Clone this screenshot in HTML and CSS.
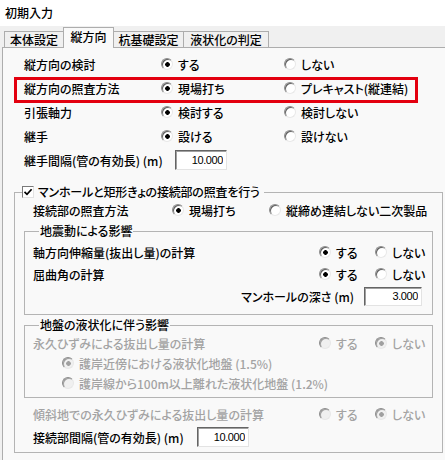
FILE: index.html
```html
<!DOCTYPE html>
<html lang="ja">
  <head>
    <meta charset="UTF-8" />
    <title>初期入力</title>
    <link rel="stylesheet" href="styles.css">
  </head>
  <body>
    <div class="titlebar">初期入力</div>
    <div class="tabs">
      <div class="tab t1">本体設定</div>
      <div class="tab t2 active">縦方向</div>
      <div class="tab t3">杭基礎設定</div>
      <div class="tab t4">液状化の判定</div>
    </div>

    <div class="panel">
      <div class="trow">
        <span>縦方向の検討</span>
        <label class="opt"><i class="rb on"></i>する</label>
        <label class="opt"><i class="rb"></i>しない</label>
      </div>
      <div class="trow mark">
        <span>縦方向の照査方法</span>
        <label class="opt"><i class="rb on"></i>現場打ち</label>
        <label class="opt"><i class="rb"></i>プレキャスト(縦連結)</label>
      </div>
      <div class="trow">
        <span>引張軸力</span>
        <label class="opt"><i class="rb on"></i>検討する</label>
        <label class="opt"><i class="rb"></i>検討しない</label>
      </div>
      <div class="trow">
        <span>継手</span>
        <label class="opt"><i class="rb on"></i>設ける</label>
        <label class="opt"><i class="rb"></i>設けない</label>
      </div>
      <div class="trow field">
        <span>継手間隔(管の有効長) (m)</span>
        <input class="num" type="text" value="10.000" readonly />
      </div>

      <fieldset class="grp">
        <legend class="chk-legend">
          <i class="cb">
            <svg width="10" height="10" viewBox="0 0 10 10"><path d="M1.5 4.8 L4 7.3 L8.6 2.2" fill="none" stroke="#000" stroke-width="1.7"/></svg>
          </i>
          <span class="cap">マンホールと矩形きょの接続部の照査を行う</span>
        </legend>

        <div class="grow method">
          <span>接続部の照査方法</span>
          <label class="opt"><i class="rb on"></i>現場打ち</label>
          <label class="opt"><i class="rb"></i>縦締め連結しない二次製品</label>
        </div>

        <fieldset class="sub-grp g1">
          <legend>地震動による影響</legend>
          <div class="prow">
            <span>軸方向伸縮量(抜出し量)の計算</span>
            <label class="opt"><i class="rb on"></i>する</label>
            <label class="opt"><i class="rb"></i>しない</label>
          </div>
          <div class="prow">
            <span>屈曲角の計算</span>
            <label class="opt"><i class="rb on"></i>する</label>
            <label class="opt"><i class="rb"></i>しない</label>
          </div>
          <div class="depth">
            <span>マンホールの深さ (m)</span>
            <input class="num wide" type="text" value="3.000" readonly />
          </div>
        </fieldset>

        <fieldset class="sub-grp g2">
          <legend>地盤の液状化に伴う影響</legend>
          <div class="prow dis">
            <span>永久ひずみによる抜出し量の計算</span>
            <label class="opt"><i class="rb"></i>する</label>
            <label class="opt"><i class="rb on"></i>しない</label>
          </div>
          <div class="sub dis">
            <label class="opt"><i class="rb on"></i>護岸近傍における液状化地盤 (1.5%)</label>
          </div>
          <div class="sub dis">
            <label class="opt"><i class="rb"></i>護岸線から100m以上離れた液状化地盤 (1.2%)</label>
          </div>
        </fieldset>

        <div class="grow pair dis slope">
          <span>傾斜地での永久ひずみによる抜出し量の計算</span>
          <label class="opt"><i class="rb"></i>する</label>
          <label class="opt"><i class="rb on"></i>しない</label>
        </div>
        <div class="grow field2">
          <span>接続部間隔(管の有効長) (m)</span>
          <input class="num" type="text" value="10.000" readonly />
        </div>
      </fieldset>
    </div>
  </body>
</html>
```

FILE: styles.css
```css
body {
  margin: 0;
  width: 445px;
  height: 460px;
  overflow: hidden;
  background-color: #f0f0f0;
  font-family: "Noto Sans CJK JP", sans-serif;
  font-size: 12px;
  font-weight: 500;
  font-feature-settings: "palt";
  color: #000;
}
.titlebar {
  height: 26px;
  line-height: 26px;
  padding-left: 5px;
  background-color: #fff;
}
.tabs {
  display: flex;
  align-items: flex-end;
  height: 21px;
  padding-left: 4px;
}
.tab {
  box-sizing: border-box;
  height: 16px;
  line-height: 15px;
  text-align: center;
  border: 1px solid #adadad;
  border-bottom: none;
  background-color: #f0f0f0;
}
.tab + .tab {
  margin-left: -1px;
}
.t1 { width: 60px; }
.t2 { width: 51px; }
.t3 { width: 71px; }
.t4 { width: 86px; }
.tab.active {
  position: relative;
  z-index: 1;
  height: 21px;
  line-height: 18px;
  margin-bottom: -1px;
  background-color: #f9f9f9;
}
.panel {
  box-sizing: border-box;
  width: 443px;
  height: 430px;
  margin-left: 2px;
  padding: 4px 0 0 21px;
  border: 1px solid #adadad;
  border-right: none;
  background-color: #f9f9f9;
}
.trow {
  display: grid;
  grid-template-columns: 137px 123px auto;
  align-items: center;
  height: 24px;
  white-space: nowrap;
}
.trow.field {
  grid-template-columns: 151px auto;
}
.mark {
  position: relative;
}
.mark::after {
  content: "";
  position: absolute;
  left: -10px;
  top: 1px;
  width: 404px;
  height: 26px;
  border: 3px solid #e3000f;
  box-sizing: border-box;
}
.opt {
  display: flex;
  align-items: center;
  gap: 5px;
  white-space: nowrap;
}
.rb {
  flex: none;
  box-sizing: border-box;
  width: 12px;
  height: 12px;
  border-radius: 50%;
  border: 1px solid;
  border-color: #8c8c8c #e8e8e8 #e8e8e8 #8c8c8c;
  box-shadow: inset 1px 1px 0 #606060;
  background: #fff;
}
.rb.on {
  background: radial-gradient(circle at 55% 55%, #000 0 2px, #fff 2.6px);
}
.dis {
  color: #a3a3a3;
}
.dis .rb {
  background: #f0f0f0;
  box-shadow: inset 1px 1px 0 #a0a0a0;
}
.dis .rb.on {
  background: radial-gradient(circle at 55% 55%, #a0a0a0 0 2px, #f0f0f0 2.6px);
}
.num {
  box-sizing: border-box;
  width: 52px;
  height: 20px;
  margin: 0;
  padding: 0 3px 0 0;
  border: 1px solid;
  border-color: #646464 #e3e3e3 #e3e3e3 #646464;
  box-shadow: inset 1px 1px 0 #a0a0a0;
  background: #fff;
  text-align: right;
  font-family: "Liberation Sans", sans-serif;
  font-size: 11px;
  letter-spacing: -0.4px;
  color: #000;
  outline: none;
}
.num.wide {
  width: 58px;
  height: 19px;
}
fieldset {
  box-sizing: border-box;
  min-width: 0;
  margin: 0;
  border: 1px solid #b4b4b4;
}
.grp {
  width: 429px;
  margin: 12px 0 0 -10px;
  padding: 0 0 5px 0;
}
.chk-legend {
  display: flex;
  align-items: center;
  gap: 4px;
  height: 16px;
  margin-left: 7px;
  padding: 0 4px 0 0;
  line-height: 16px;
}
.cap {
  letter-spacing: -0.2px;
}
.cb {
  display: flex;
  align-items: center;
  justify-content: center;
  box-sizing: border-box;
  width: 12px;
  height: 12px;
  border: 1px solid;
  border-color: #7a7a7a #e3e3e3 #e3e3e3 #7a7a7a;
  background: #fff;
}
.grow {
  display: grid;
  align-items: center;
  height: 20px;
  padding: 0 10px 0 18px;
  white-space: nowrap;
}
.method {
  grid-template-columns: 139px 97px auto;
}
.sub-grp {
  margin: 3px 9px 0 9px;
  padding: 2px 0 7px 8px;
}
.sub-grp legend {
  margin-left: 6px;
  padding: 0 1px;
  line-height: 16px;
}
.g2 {
  margin-top: 2px;
  padding: 0 0 4px 8px;
}
.prow {
  display: grid;
  grid-template-columns: 1fr 56px 57px;
  align-items: center;
  height: 22px;
  white-space: nowrap;
}
.g2 .prow {
  height: 20px;
}
.depth {
  display: flex;
  justify-content: flex-end;
  align-items: center;
  gap: 10px;
  height: 22px;
  padding-right: 10px;
}
.sub {
  display: flex;
  align-items: center;
  height: 20px;
  padding-left: 29px;
}
.pair {
  grid-template-columns: 1fr 56px 57px;
}
.slope {
  margin-top: 6px;
}
.field2 {
  grid-template-columns: 164px auto;
  margin-top: 3px;
}
```
